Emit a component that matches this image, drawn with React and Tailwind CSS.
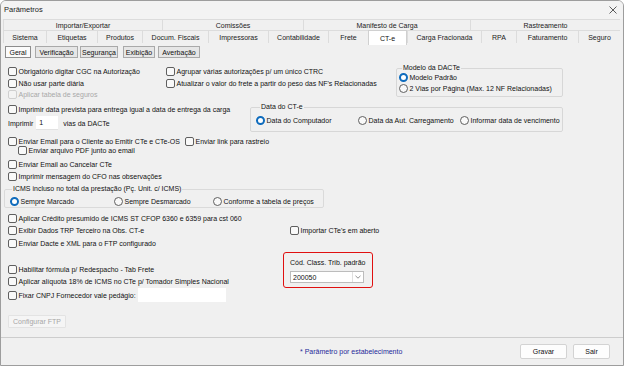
import React from "react";

function Check({ checked = false, disabled = false }) {
  if (checked)
    return (
      <span className="inline-flex items-center justify-center w-[9px] h-[9px] rounded-[2px] bg-[#0f6cbd] shrink-0">
        <svg width="7" height="7" viewBox="0 0 10 10">
          <path d="M2 5.2 L4.2 7.3 L8.2 2.8" fill="none" stroke="white" strokeWidth="1.5" />
        </svg>
      </span>
    );
  return (
    <span
      className={
        disabled
          ? "inline-block w-[9px] h-[9px] rounded-[2px] border border-[#cfcfcf] bg-[#f3f3f3] shrink-0"
          : "inline-block w-[9px] h-[9px] rounded-[2px] border border-[#5f5f5f] bg-[#f9f9f9] shrink-0"
      }
    />
  );
}

function Radio({ on = false }) {
  return on ? (
    <span className="inline-block w-[9px] h-[9px] rounded-full border-[2.5px] border-[#0f6cbd] bg-white shrink-0" />
  ) : (
    <span className="inline-block w-[9px] h-[9px] rounded-full border border-[#5f5f5f] bg-[#f9f9f9] shrink-0" />
  );
}

function CRow({ label, checked, disabled, h = "h-[11.5px]" }) {
  return (
    <div className={`flex items-center ${h}`}>
      <Check checked={checked} disabled={disabled} />
      <span className={disabled ? "ml-[1.5px] text-[#a8a8a8] whitespace-nowrap" : "ml-[1.5px] whitespace-nowrap"}>{label}</span>
    </div>
  );
}

function RItem({ label, on, w }) {
  return (
    <div className={`flex items-center ${w}`}>
      <Radio on={on} />
      <span className="ml-[1.5px] whitespace-nowrap">{label}</span>
    </div>
  );
}

const row1 = [
  ["Importar/Exportar", "w-[159px]"],
  ["Comissões", "w-[141px]"],
  ["Manifesto de Carga", "w-[167px]"],
  ["Rastreamento", "w-[150px]"],
];
const row2 = [
  ["Sistema", "w-[43px]"],
  ["Etiquetas", "w-[51px]"],
  ["Produtos", "w-[45px]"],
  ["Docum. Fiscais", "w-[66px]"],
  ["Impressoras", "w-[60px]"],
  ["Contabilidade", "w-[60px]"],
  ["Frete", "w-[40px]"],
  ["CT-e", "w-[39px]"],
  ["Carga Fracionada", "w-[74px]"],
  ["RPA", "w-[35px]"],
  ["Faturamento", "w-[62px]"],
  ["Seguro", "w-[42px]"],
];

export default function App() {
  return (
    <div className="w-[624px] h-[366px] box-border border border-[#9d9d9d] rounded-t-[6px] bg-[#f0f0f0] font-['Liberation_Sans',Arial,sans-serif] text-[7px] leading-none text-[#111] flex flex-col overflow-hidden">
      {/* title bar */}
      <div className="h-[18px] flex items-center justify-between bg-[#f3f3f3] shrink-0">
        <span className="ml-[3px] text-[7.5px] text-[#1b1b1b]">Parâmetros</span>
        <svg className="mr-[6px]" width="8" height="8" viewBox="0 0 8 8">
          <path d="M0.5 0.5 L7.5 7.5 M7.5 0.5 L0.5 7.5" stroke="#333" strokeWidth="0.8" />
        </svg>
      </div>

      {/* tab rows */}
      <div className="ml-[2px] flex h-[11px] shrink-0">
        {row1.map(([t, w]) => (
          <div key={t} className={`${w} border-t border-l border-[#dcdcdc] flex items-center justify-center text-[#1a1a1a]`}>{t}</div>
        ))}
      </div>
      <div className="ml-[2px] flex h-[13px] shrink-0">
        {row2.map(([t, w]) =>
          t === "CT-e" ? (
            <div key={t} className={`${w} h-[15px] bg-white border-t border-l border-r border-[#d0d0d0] flex items-center justify-center`}>{t}</div>
          ) : (
            <div key={t} className={`${w} border-t border-l border-[#dcdcdc] flex items-center justify-center text-[#1a1a1a]`}>{t}</div>
          )
        )}
      </div>

      {/* sub tabs */}
      <div className="flex h-[12px] mt-[3px] ml-[4px] shrink-0">
        <div className="w-[26px] border border-[#8c8c8c] bg-[#fbfbfb] flex items-center justify-center">Geral</div>
        <div className="w-[43px] ml-[4px] border border-[#a9a9a9] bg-[#e6e6e6] flex items-center justify-center">Verificação</div>
        <div className="w-[38px] ml-[2px] border border-[#a9a9a9] bg-[#e6e6e6] flex items-center justify-center">Segurança</div>
        <div className="w-[32px] ml-[5px] border border-[#a9a9a9] bg-[#e6e6e6] flex items-center justify-center">Exibição</div>
        <div className="w-[42px] ml-[3px] border border-[#a9a9a9] bg-[#e6e6e6] flex items-center justify-center">Averbação</div>
      </div>

      {/* content */}
      <div className="flex-1 pl-[7px] flex flex-col">
        {/* section 1 */}
        <div className="flex h-[40px] mt-[4px]">
          <div className="w-[158px] pt-[4px]">
            <CRow label="Obrigatório digitar CGC na Autorização" />
            <CRow label="Não usar parte diária" />
            <CRow label="Aplicar tabela de seguros" disabled />
          </div>
          <div className="w-[230px] pt-[4px]">
            <CRow label="Agrupar várias autorizações p/ um único CTRC" />
            <CRow label="Atualizar o valor do frete a partir do peso das NF's Relacionadas" />
          </div>
          <fieldset className="mt-[2px] w-[167px] h-[33px] border border-[#d7d7d7] rounded-[2px] pl-[2px]">
            <legend className="ml-[3px] px-[1px] leading-[8px]">Modelo da DACTe</legend>
            <RItem label="Modelo Padrão" on w="h-[11px]" />
            <RItem label="2 Vias por Página (Max. 12 NF Relacionadas)" w="h-[11px]" />
          </fieldset>
        </div>

        {/* section 2 */}
        <div className="flex h-[33px]">
          <div className="w-[242px] pt-[1px]">
            <CRow label="Imprimir data prevista para entrega igual a data de entrega da carga" h="h-[12px]" />
            <div className="flex items-center h-[16px]">
              <span>Imprimir</span>
              <div className="ml-[3px] w-[22px] h-[14px] bg-white border-b border-[#e2e2e2] flex items-center pl-[3px]">1</div>
              <span className="ml-[5px]">vias da DACTe</span>
            </div>
          </div>
          <fieldset className="mt-[1px] w-[313px] h-[29px] border border-[#d7d7d7] rounded-[2px] pl-[5px]">
            <legend className="ml-[4px] px-[1px] leading-[8px]">Data do CT-e</legend>
            <div className="flex h-[11px] mt-[4px]">
              <RItem label="Data do Computador" on w="w-[102px]" />
              <RItem label="Data da Aut. Carregamento" w="w-[102px]" />
              <RItem label="Informar data de vencimento" w="w-[100px]" />
            </div>
          </fieldset>
        </div>

        {/* rows */}
        <div className="flex items-center h-[10px] mt-[1px]">
          <div className="w-[177px]">
            <CRow label="Enviar Email para o Cliente ao Emitir CTe e CTe-OS" h="h-[10px]" />
          </div>
          <CRow label="Enviar link para rastreio" h="h-[10px]" />
        </div>
        <div className="ml-[10px]">
          <CRow label="Enviar arquivo PDF junto ao email" h="h-[9px]" />
        </div>
        <div className="mt-[3px]">
          <CRow label="Enviar Email ao Cancelar CTe" h="h-[12px]" />
          <CRow label="Imprimir mensagem do CFO nas observações" h="h-[12px]" />
        </div>

        <fieldset className="-ml-[4px] mt-[3px] w-[316px] h-[23px] border border-[#dadada] rounded-[2px] pl-[5px]">
          <legend className="ml-[2px] px-[1px] leading-[8px]">ICMS incluso no total da prestação (Pç. Unit. c/ ICMS)</legend>
          <div className="flex h-[11px] mt-[3px]">
            <RItem label="Sempre Marcado" on w="w-[104px]" />
            <RItem label="Sempre Desmarcado" w="w-[99px]" />
            <RItem label="Conforme a tabela de preços" w="w-[110px]" />
          </div>
        </fieldset>

        <div className="mt-[4px]">
          <CRow label="Aplicar Crédito presumido de ICMS ST CFOP 6360 e 6359 para cst 060" h="h-[12px]" />
          <div className="flex h-[13px] items-center">
            <div className="w-[282px]">
              <CRow label="Exibir Dados TRP Terceiro na Obs. CT-e" h="h-[13px]" />
            </div>
            <CRow label="Importar CTe's em aberto" h="h-[13px]" />
          </div>
          <CRow label="Enviar Dacte e XML para o FTP configurado" h="h-[13px]" />
        </div>

        {/* section 3 */}
        <div className="flex h-[53px]">
          <div className="w-[275px] pt-[13px]">
            <CRow label="Habilitar fórmula p/ Redespacho - Tab Frete" h="h-[12px]" />
            <CRow label="Aplicar alíquota 18% de ICMS no CTe p/ Tomador Simples Nacional" h="h-[12px]" />
            <div className="flex items-center h-[14px] mt-[1px]">
              <Check />
              <span className="ml-[1.5px] w-[119px] whitespace-nowrap">Fixar CNPJ Fornecedor vale pedágio:</span>
              <div className="w-[88px] h-[14px] bg-white" />
            </div>
          </div>
          <div className="mt-[2px] w-[90px] h-[36px] border-[1.5px] border-[#e01010] rounded-[3px] pl-[6px] pt-[6px]">
            <div className="leading-[8px]">Cód. Class. Trib. padrão</div>
            <div className="mt-[4px] w-[74px] h-[12px] bg-white border border-[#bcbcbc] flex items-center justify-between">
              <span className="pl-[2px]">200050</span>
              <span className="w-[10px] h-[10px] mr-[1px] border-l border-[#e0e0e0] flex items-center justify-center">
                <svg width="6" height="4" viewBox="0 0 6 4">
                  <path d="M0.5 0.8 L3 3.2 L5.5 0.8" fill="none" stroke="#666" strokeWidth="0.7" />
                </svg>
              </span>
            </div>
          </div>
        </div>

        <div className="mt-[12px] w-[58px] h-[13px] border border-[#e3e3e3] bg-[#f5f5f5] rounded-[1px] flex items-center justify-center text-[#a6a6a6]">
          Configurar FTP
        </div>
      </div>

      {/* bottom bar */}
      <div className="h-[28px] border-t border-[#cdcdcd] flex items-center shrink-0">
        <span className="ml-[299px] text-[#1e2a9a]">* Parâmetro por estabelecimento</span>
        <div className="ml-auto flex gap-[6px] mr-[13px]">
          <div className="w-[47px] h-[15px] bg-[#fdfdfd] border border-[#d3d3d3] rounded-[2px] flex items-center justify-center">Gravar</div>
          <div className="w-[37px] h-[15px] bg-[#fdfdfd] border border-[#d3d3d3] rounded-[2px] flex items-center justify-center">Sair</div>
        </div>
      </div>
    </div>
  );
}
